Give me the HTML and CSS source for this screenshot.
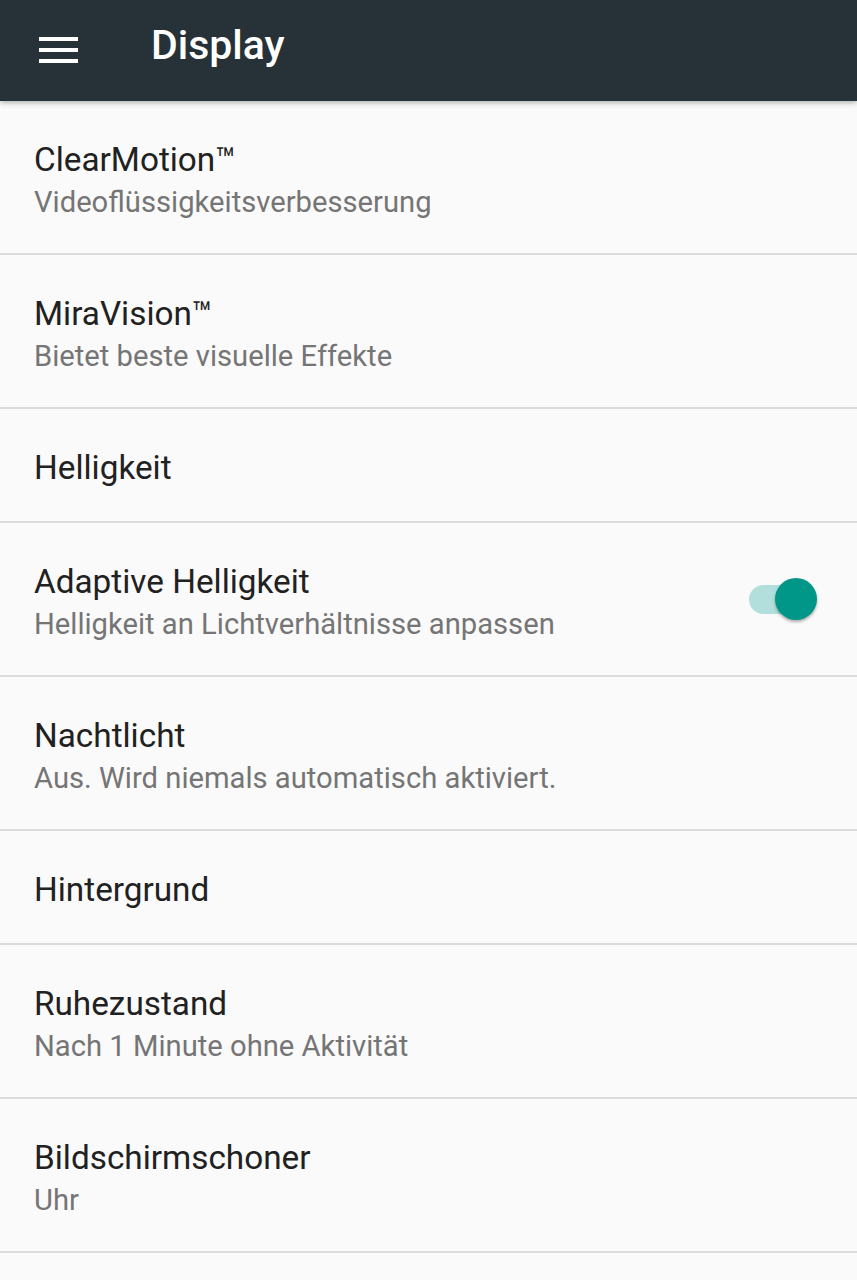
FILE: index.html
```html
<!doctype html>
<html>
<head>
	<meta http-equiv="Content-Type" content="text/html; charset=utf-8" />
	<title>Display</title>
	<link rel="stylesheet" href="styles.css">
</head>
<body>
	<div class="toolbar">
		<span class="menu">
			<svg width="40" height="30" viewBox="0 0 40 30">
				<rect x="0" y="2" width="39" height="4" fill="#fff" />
				<rect x="0" y="13" width="39" height="4" fill="#fff" />
				<rect x="0" y="24" width="39" height="4" fill="#fff" />
			</svg>
		</span>
		<h1>Display</h1>
	</div>

	<ul class="list">
		<li class="item two">
			<div class="text">
				<div class="title">ClearMotion™</div>
				<div class="summary">Videoflüssigkeitsverbesserung</div>
			</div>
		</li>
		<li class="item two">
			<div class="text">
				<div class="title">MiraVision™</div>
				<div class="summary">Bietet beste visuelle Effekte</div>
			</div>
		</li>
		<li class="item one">
			<div class="text">
				<div class="title">Helligkeit</div>
			</div>
		</li>
		<li class="item two">
			<div class="text">
				<div class="title">Adaptive Helligkeit</div>
				<div class="summary">Helligkeit an Lichtverhältnisse anpassen</div>
			</div>
			<span class="switch on"><span class="track"></span><span class="thumb"></span></span>
		</li>
		<li class="item two">
			<div class="text">
				<div class="title">Nachtlicht</div>
				<div class="summary">Aus. Wird niemals automatisch aktiviert.</div>
			</div>
		</li>
		<li class="item one">
			<div class="text">
				<div class="title">Hintergrund</div>
			</div>
		</li>
		<li class="item two">
			<div class="text">
				<div class="title">Ruhezustand</div>
				<div class="summary">Nach 1 Minute ohne Aktivität</div>
			</div>
		</li>
		<li class="item two">
			<div class="text">
				<div class="title">Bildschirmschoner</div>
				<div class="summary">Uhr</div>
			</div>
		</li>
	</ul>
</body>
</html>
```

FILE: styles.css
```css
body,
ul,
li,
h1 {
	margin: 0;
	padding: 0;
	list-style: none;
}

body {
	background: #fafafa;
	font-family: Roboto, "Liberation Sans", sans-serif;
	width: 857px;
	height: 1280px;
	overflow: hidden;
}

.toolbar {
	height: 101px;
	background: #263238;
	display: flex;
	align-items: center;
	box-shadow: 0 2px 5px rgba(0, 0, 0, 0.28);
	position: relative;
	z-index: 1;
}

.menu {
	width: 40px;
	height: 30px;
	margin-left: 39px;
	margin-top: -2px;
	display: flex;
}

.toolbar h1 {
	margin-left: 72px;
	color: #fff;
	font-size: 41px;
	font-weight: 500;
	margin-top: -12px;
}

.list .item {
	display: flex;
	align-items: center;
	padding: 0 34px;
	border-bottom: 2px solid #dcdcdc;
}

.item.two {
	height: 152px;
}

.item.one {
	height: 112px;
}

.item .text {
	flex: 1;
}

.item.two .text {
	margin-top: 10px;
}

.item.one .text {
	margin-top: 5px;
}

.title {
	font-size: 33.3px;
	color: #212121;
	line-height: 40px;
}

.summary {
	font-size: 29.2px;
	color: #757575;
	line-height: 44px;
}

.switch {
	position: relative;
	width: 72px;
	height: 44px;
	margin-right: 6px;
}

.switch .track {
	position: absolute;
	left: 4px;
	top: 8px;
	width: 64px;
	height: 29px;
	border-radius: 15px;
	background: #b2dfdb;
}

.switch .thumb {
	position: absolute;
	right: 0;
	top: 1px;
	width: 42px;
	height: 42px;
	border-radius: 50%;
	background: #009688;
	box-shadow: 0 2px 3px rgba(0, 0, 0, 0.3);
}
```
